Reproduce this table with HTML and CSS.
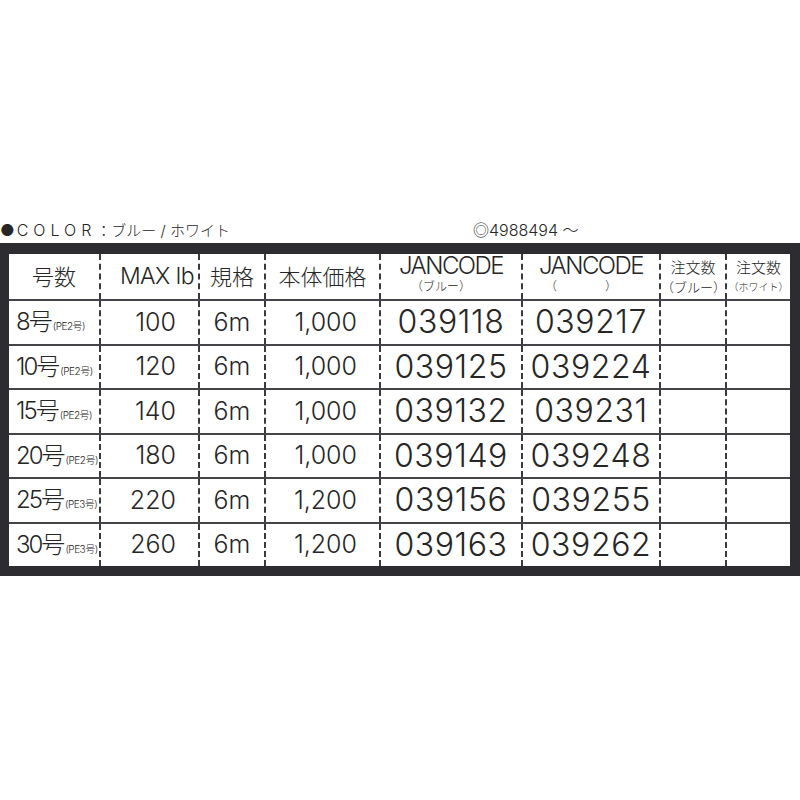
FILE: index.html
```html
<!DOCTYPE html>
<html lang="ja">
<head>
<meta charset="utf-8">
<title>COLOR table</title>
<link rel="stylesheet" href="styles.css">
</head>
<body>
<div class="page">
  <div class="title">
    <span class="color"><span class="dot">●</span><span class="latin">COLOR</span>：ブルー / ホワイト</span>
    <span class="code">◎4988494 ～</span>
  </div>
  <div class="frame">
    <table class="spec">
      <colgroup>
        <col class="c1"><col class="c2"><col class="c3"><col class="c4"><col class="c5"><col class="c6"><col class="c7"><col class="c8">
      </colgroup>
      <thead>
        <tr>
          <th class="h-big">号数</th>
          <th class="h-big h-max">MAX lb</th>
          <th class="h-big">規格</th>
          <th class="h-big">本体価格</th>
          <th class="h-jan"><span class="jan">JANCODE</span><span class="jan-sub">（ブルー）</span></th>
          <th class="h-jan"><span class="jan">JANCODE</span><span class="jan-sub">（　　　　）</span></th>
          <th class="h-order"><span class="ord">注文数</span><span class="ord-sub">（ブルー）</span></th>
          <th class="h-order"><span class="ord">注文数</span><span class="ord-sub small">（ホワイト）</span></th>
        </tr>
      </thead>
      <tbody>
        <tr><td class="size">8号<small>(PE2号)</small></td><td class="num">100</td><td class="len">6m</td><td class="price">1,000</td><td class="jcode">039118</td><td class="jcode">039217</td><td></td><td></td></tr>
        <tr><td class="size">10号<small>(PE2号)</small></td><td class="num">120</td><td class="len">6m</td><td class="price">1,000</td><td class="jcode">039125</td><td class="jcode">039224</td><td></td><td></td></tr>
        <tr><td class="size">15号<small>(PE2号)</small></td><td class="num">140</td><td class="len">6m</td><td class="price">1,000</td><td class="jcode">039132</td><td class="jcode">039231</td><td></td><td></td></tr>
        <tr><td class="size">20号<small>(PE2号)</small></td><td class="num">180</td><td class="len">6m</td><td class="price">1,000</td><td class="jcode">039149</td><td class="jcode">039248</td><td></td><td></td></tr>
        <tr><td class="size">25号<small>(PE3号)</small></td><td class="num">220</td><td class="len">6m</td><td class="price">1,200</td><td class="jcode">039156</td><td class="jcode">039255</td><td></td><td></td></tr>
        <tr><td class="size">30号<small>(PE3号)</small></td><td class="num">260</td><td class="len">6m</td><td class="price">1,200</td><td class="jcode">039163</td><td class="jcode">039262</td><td></td><td></td></tr>
      </tbody>
    </table>
  </div>
</div>
</body>
</html>
```
FILE: styles.css
```css
html, body {
  margin: 0;
  padding: 0;
  background: #ffffff;
}
body {
  font-family: Inter, "Noto Sans CJK JP", sans-serif;
  font-weight: 300;
  color: #262626;
}
.page {
  padding-top: 219px;
  width: 800px;
}
.title {
  display: flex;
  align-items: baseline;
  height: 24px;
  font-size: 15px;
  line-height: 22px;
}
.color {
  width: 473px;
  white-space: nowrap;
}
.dot {
  font-size: 16px;
  margin-right: 2px;
  font-weight: 400;
}
.latin {
  letter-spacing: 5px;
  font-size: 16px;
  font-weight: 300;
}
.code {
  font-size: 16px;
}
.frame {
  background: #2c2c31;
  padding: 11px 10px 10px 9px;
  width: 781px;
}
.spec {
  width: 781px;
  table-layout: fixed;
  border-collapse: collapse;
  background: #ffffff;
}
.c1 { width: 91px; }
.c2 { width: 99px; }
.c3 { width: 66px; }
.c4 { width: 115px; }
.c5 { width: 142px; }
.c6 { width: 138px; }
.c7 { width: 66px; }
.c8 { width: 64px; }
.spec th, .spec td {
  padding: 0;
  border-left: 2px dashed #3a3a3a;
  border-top: 2px solid #444448;
  vertical-align: middle;
  white-space: nowrap;
  line-height: 1;
}
.spec th:first-child, .spec td:first-child { border-left: none; }
.spec thead th { border-top: none; height: 45px; font-weight: 300; }
.spec tbody td { height: 42.5px; }
.h-big {
  font-size: 22px;
  text-align: center;
}
.h-max {
  font-size: 23px;
  text-align: right;
  padding-right: 4px !important;
  letter-spacing: -0.5px;
}
.h-jan, .h-order { text-align: center; }
.jan {
  display: block;
  font-size: 24px;
  letter-spacing: -1.5px;
  margin-top: -5px;
  line-height: 22px;
}
.jan-sub {
  display: block;
  font-size: 12px;
  line-height: 13px;
  margin-top: 3px;
  margin-right: 20px;
}
.ord {
  display: block;
  font-size: 15px;
  line-height: 18px;
}
.ord-sub {
  display: block;
  font-size: 13px;
  line-height: 16px;
  margin-top: 2px;
}
.ord-sub.small { font-size: 10px; }
.size {
  font-size: 24px;
  letter-spacing: -2px;
  padding-left: 7px !important;
}
.size small {
  font-size: 10px;
  letter-spacing: -0.5px;
  margin-left: 2px;
}
.num, .price, .len, .jcode {
  font-size: 25px;
}
.num { text-align: right; padding-right: 22px !important; }
.len { text-align: center; }
.price { text-align: right; padding-right: 22px !important; }
.jcode { text-align: center; font-size: 32px; letter-spacing: 0.6px; }
```
